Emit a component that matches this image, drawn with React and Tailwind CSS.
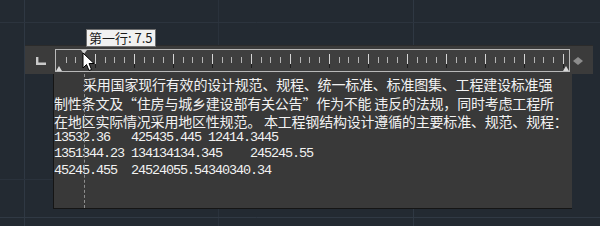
import React from 'react';

const cjk = { fontFamily: '"Noto Sans CJK SC", "Noto Sans", sans-serif' };

// ruler ticks, x is relative to the ruler's left border
function RulerTicks() {
    const ticks = [];
    for (let i = 1; i < 53; i++) {
        const x = Math.round(i * 9.745) + 0.5;
        if (i % 4 === 0) {
            ticks.push(<line key={'l' + i} x1={x} y1={4} x2={x} y2={14} stroke="#d4d4d4" strokeWidth="1" />);
            ticks.push(<line key={'d' + i} x1={x} y1={14} x2={x} y2={18} stroke="#1e1e1e" strokeWidth="1" />);
        } else {
            ticks.push(<line key={'s' + i} x1={x} y1={7} x2={x} y2={13} stroke="#b4b4b4" strokeWidth="1" />);
        }
    }
    return (
        <svg width="513" height="21" className="block">
            {ticks}
            {/* first line indent marker */}
            <polygon points="25,0 31,0 28,4" fill="#cfcfcf" />
            {/* hanging indent marker */}
            <polygon points="0,21 3,16 6,21" fill="#d8d8d8" />
            {/* right indent marker */}
            <polygon points="507,21 510,16 513,21" fill="#d8d8d8" />
        </svg>
    );
}

function GridLines() {
    return (
        <svg width="600" height="226" className="absolute inset-0">
            <line x1="24.5" y1="0" x2="24.5" y2="226" stroke="#2f3843" />
            <line x1="218.5" y1="0" x2="218.5" y2="226" stroke="#2a323c" />
            <line x1="413.5" y1="0" x2="413.5" y2="226" stroke="#2f3843" />
            <line x1="0" y1="22.5" x2="600" y2="22.5" stroke="#2c343e" />
            <line x1="0" y1="217.5" x2="600" y2="217.5" stroke="#303944" />
            <line x1="0" y1="179.5" x2="53" y2="179.5" stroke="#2a323c" />
        </svg>
    );
}

export default function App() {
    const numStyle = { fontFamily: '"Liberation Mono", monospace', letterSpacing: '-1.1px' };

    return (
        <div className="relative w-[600px] h-[226px] overflow-hidden bg-[#232a32]">
            <GridLines />

            <div className="relative pt-[45px] pl-[25px]">
                {/* ruler bar */}
                <div className="flex w-[568px] h-[29px] bg-[#3b3b3b] border-t border-[#2b2b2b]">
                    <svg width="10" height="8" className="ml-[11px] mt-[11px]">
                        <path d="M1.2 0 V6.8 H10" fill="none" stroke="#c9c9c9" strokeWidth="2.4" />
                    </svg>
                    <div className="ml-[9px] mt-[3px] w-[515px] h-[23px] border border-[#b9b9b9] bg-[#3f3f3f]">
                        <RulerTicks />
                    </div>
                    <svg width="10" height="8" className="ml-[3px] mt-[11px]">
                        <polygon points="5,0 10,4 5,8 0,4" fill="#8c8c8c" />
                    </svg>
                </div>

                {/* text box */}
                <div className="relative ml-[28px] w-[519px] h-[135px] bg-[#393939] border-l border-b border-[#151515] overflow-hidden text-[#f2f2f2]">
                    <div className="pt-[1px] text-[14px] leading-[18.5px] tracking-[-0.2px] whitespace-nowrap" style={cjk}>
                        <div className="pl-[29px]">采用国家现行有效的设计规范、规程、统一标准、标准图集、工程建设标准强</div>
                        <div>制性条文及“住房与城乡建设部有关公告”作为不能 违反的法规，同时考虑工程所</div>
                        <div>在地区实际情况采用地区性规范。 本工程钢结构设计遵循的主要标准、规范、规程：</div>
                    </div>
                    <div className="-mt-[1px] text-[13.5px] leading-[16.5px] whitespace-pre" style={numStyle}>
                        <div>{'13532.36   425435.445 12414.3445'}</div>
                        <div>{'1351344.23 134134134.345    245245.55'}</div>
                        <div>{'45245.455  24524055.54340340.34'}</div>
                    </div>
                    {/* indent guide */}
                    <div className="absolute left-[30px] top-0 h-full border-l border-dashed border-[#8e8e8e]"></div>
                </div>
            </div>

            {/* tooltip */}
            <div className="absolute left-[86px] top-[29px] h-[18px] px-[2px] flex items-center bg-[#f1f1f1] border border-[#6f6f6f] text-[13px] text-[#1b1b1b] whitespace-nowrap" style={cjk}>
                第一行: 7.5
            </div>

            {/* mouse pointer */}
            <svg width="13" height="20" className="absolute left-[82px] top-[52px]">
                <path d="M1 1 L1 16 L4.5 12.5 L7 18.5 L9.5 17.5 L7 11.5 L12 11.5 Z" fill="#ffffff" stroke="#000000" strokeWidth="1" strokeLinejoin="round" />
            </svg>
        </div>
    );
}
